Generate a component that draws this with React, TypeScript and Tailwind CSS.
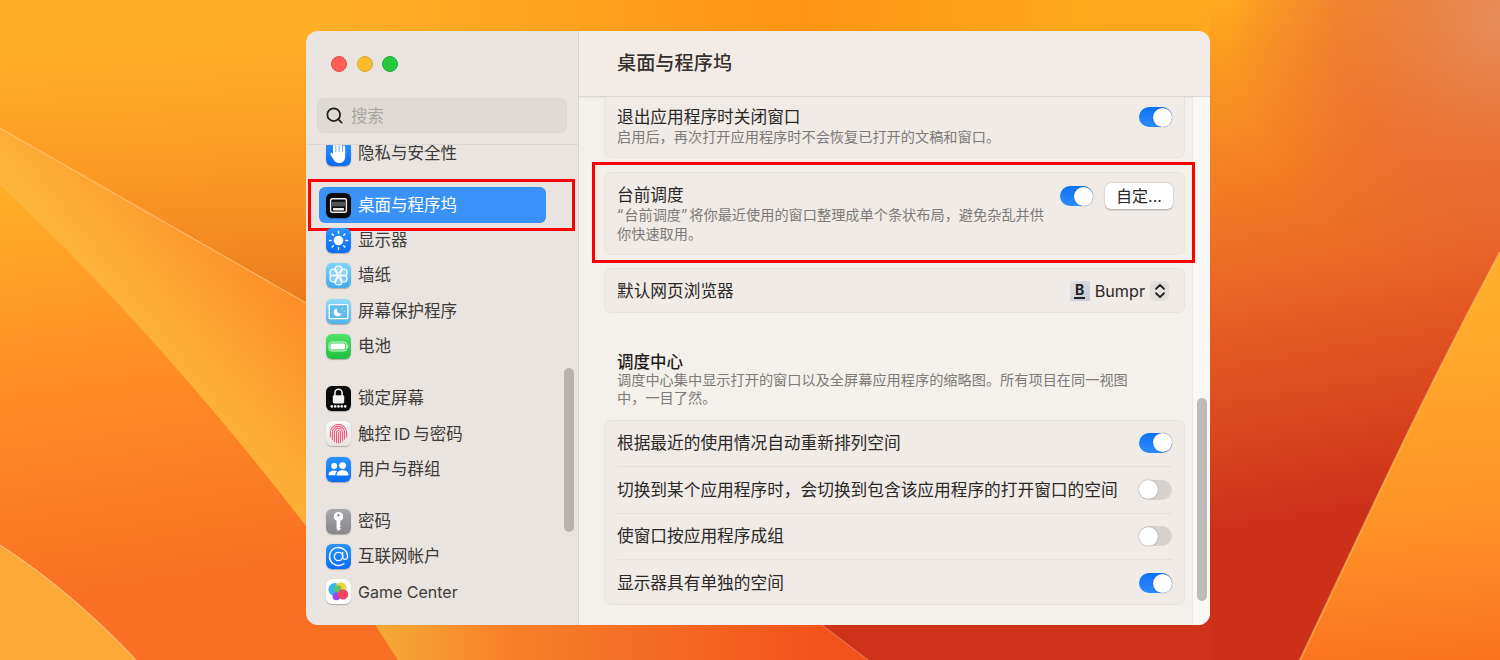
import type { ReactNode } from "react";
import { Search } from "lucide-react";

// wallpaper is one drawing, the window sits on top of it
function Wallpaper() {
  return (
    <svg className="absolute inset-0 h-[660px] w-[1500px]" viewBox="0 0 1500 660">
      <defs>
        <linearGradient id="wpTop" gradientUnits="userSpaceOnUse" x1="306" y1="20" x2="320" y2="310">
          <stop offset="0" stopColor="#ffb029" />
          <stop offset="0.5" stopColor="#fb9a24" />
          <stop offset="1" stopColor="#ea7a1c" />
        </linearGradient>
        <linearGradient id="wpStrip" gradientUnits="userSpaceOnUse" x1="306" y1="0" x2="1210" y2="0">
          <stop offset="0" stopColor="#ffb029" />
          <stop offset="0.55" stopColor="#ff9514" />
          <stop offset="0.85" stopColor="#ffa81c" />
          <stop offset="1" stopColor="#ffa81f" />
        </linearGradient>
        <linearGradient id="wpBand" gradientUnits="userSpaceOnUse" x1="130" y1="350" x2="270" y2="240">
          <stop offset="0" stopColor="#fdb53c" />
          <stop offset="0.3" stopColor="#fcab34" />
          <stop offset="1" stopColor="#fd8b26" />
        </linearGradient>
        <linearGradient id="wpLow" gradientUnits="userSpaceOnUse" x1="0" y1="190" x2="60" y2="600">
          <stop offset="0" stopColor="#ffae28" />
          <stop offset="0.5" stopColor="#ff8c24" />
          <stop offset="1" stopColor="#f97024" />
        </linearGradient>
        <linearGradient id="wpBottom" gradientUnits="userSpaceOnUse" x1="375" y1="0" x2="822" y2="0">
          <stop offset="0" stopColor="#f5ab35" />
          <stop offset="0.3" stopColor="#f7802a" />
          <stop offset="1" stopColor="#f2531c" />
        </linearGradient>
        <linearGradient id="wpRight" gradientUnits="userSpaceOnUse" x1="1230" y1="0" x2="1320" y2="520">
          <stop offset="0" stopColor="#ffa81f" />
          <stop offset="0.55" stopColor="#ea6426" />
          <stop offset="1" stopColor="#cc3018" />
        </linearGradient>
        <radialGradient id="wpCorner" gradientUnits="userSpaceOnUse" cx="1500" cy="20" r="270">
          <stop offset="0" stopColor="#e58c5c" stopOpacity="0.95" />
          <stop offset="0.6" stopColor="#e3653e" stopOpacity="0.5" />
          <stop offset="1" stopColor="#e05a38" stopOpacity="0" />
        </radialGradient>
        <linearGradient id="wpBig" gradientUnits="userSpaceOnUse" x1="1460" y1="290" x2="1490" y2="660">
          <stop offset="0" stopColor="#ffaf2c" />
          <stop offset="0.6" stopColor="#fe9427" />
          <stop offset="1" stopColor="#fb7220" />
        </linearGradient>
      </defs>
      <rect x="0" y="0" width="420" height="660" fill="url(#wpLow)" />
      <path d="M0 0H340V322L0 128Z" fill="url(#wpTop)" />
      <rect x="306" y="0" width="904" height="40" fill="url(#wpStrip)" />
      <path d="M0 128L306 303L345 325V575L306 526Q153 328 0 185Z" fill="url(#wpBand)" />
      <path d="M0 128L306 303" stroke="#ffd39a" strokeOpacity="0.55" strokeWidth="1.2" fill="none" />
      <path d="M0 545Q70 590 136 660H0Z" fill="#fbaa37" />
      <path d="M0 545Q70 590 136 660" stroke="#ffd9a0" strokeOpacity="0.6" strokeWidth="1.2" fill="none" />
      <rect x="700" y="600" width="510" height="60" fill="#ce3319" />
      <path d="M359 600L398 660H868L789 600Z" fill="url(#wpBottom)" />
      <path d="M868 660L822 625" stroke="#f58a60" strokeOpacity="0.6" strokeWidth="1.2" fill="none" />
      <rect x="1210" y="0" width="290" height="660" fill="url(#wpRight)" />
      <rect x="1210" y="0" width="290" height="660" fill="url(#wpCorner)" />
      <path d="M1500 252Q1437 370 1377 497Q1340 575 1300 660H1500Z" fill="url(#wpBig)" />
      <path d="M1500 252Q1437 370 1377 497Q1340 575 1300 660" stroke="#ffc56a" strokeOpacity="0.55" strokeWidth="2" fill="none" />
    </svg>
  );
}

function Tile({ className, children }: { className: string; children?: ReactNode }) {
  return (
    <div className={`h-[25px] w-[25px] shrink-0 overflow-hidden rounded-[6px] shadow-[0_0.5px_1px_rgba(0,0,0,0.25)] ${className}`}>
      <svg viewBox="0 0 25 25" className="h-[25px] w-[25px]">
        {children}
      </svg>
    </div>
  );
}

const BLUE = "bg-linear-to-b from-[#2b93ff] to-[#0a6cf5]";

const icons: Record<string, ReactNode> = {
  privacy: (
    <Tile className={BLUE}>
      <g fill="#fff">
        <rect x="7" y="3.5" width="2.6" height="10" rx="1.2" />
        <rect x="10.2" y="1.5" width="2.6" height="11" rx="1.2" />
        <rect x="13.4" y="2.5" width="2.6" height="10" rx="1.2" />
        <rect x="16.6" y="4.5" width="2.6" height="9" rx="1.2" />
        <path d="M7 11H19.2V15.5C19.2 19.8 16.8 22 13.2 22C10 22 8.8 20.4 7.4 18.2L4.4 13.4C3.8 12.2 5.4 11.1 6.4 12.2L7 13Z" />
      </g>
    </Tile>
  ),
  dock: (
    <Tile className="bg-[#0b0b0b]">
      <rect x="4.6" y="5.8" width="15.8" height="13.4" rx="1.8" fill="none" stroke="#eee" strokeWidth="1.4" />
      <rect x="5.8" y="8.8" width="13.4" height="4.6" fill="#55565a" />
      <rect x="7" y="15" width="11" height="2.4" rx="0.6" fill="#eee" />
    </Tile>
  ),
  display: (
    <Tile className={BLUE}>
      <circle cx="12.5" cy="12.5" r="4.8" fill="#fff" />
      <g stroke="#fff" strokeWidth="1.4" strokeLinecap="round">
        <path d="M12.5 3.4V5.2M12.5 19.8V21.6M3.4 12.5H5.2M19.8 12.5H21.6M6.1 6.1L7.3 7.3M17.7 17.7L18.9 18.9M6.1 18.9L7.3 17.7M17.7 7.3L18.9 6.1" />
      </g>
    </Tile>
  ),
  wallpaper: (
    <Tile className="bg-linear-to-b from-[#7fd3fb] to-[#43a9ec]">
      <g fill="#ffffff" fillOpacity="0.25" stroke="#fff" strokeWidth="1.2">
        <circle cx="12.5" cy="6.6" r="3.5" />
        <circle cx="12.5" cy="18.4" r="3.5" />
        <circle cx="7.4" cy="9.5" r="3.5" />
        <circle cx="17.6" cy="9.5" r="3.5" />
        <circle cx="7.4" cy="15.5" r="3.5" />
        <circle cx="17.6" cy="15.5" r="3.5" />
      </g>
      <circle cx="12.5" cy="12.5" r="1.6" fill="#fff" />
    </Tile>
  ),
  saver: (
    <Tile className="bg-linear-to-b from-[#8ddcf8] to-[#4fb4e8]">
      <rect x="3.2" y="5.6" width="18.6" height="14" rx="0.8" fill="#5cbdec" stroke="#fff" strokeWidth="1.4" />
      <path d="M11.2 9.2A4 4 0 1 0 15.6 14.2A3.6 3.6 0 0 1 11.2 9.2Z" fill="#fff" />
      <circle cx="16" cy="9.6" r="0.7" fill="#fff" />
      <circle cx="18.2" cy="12" r="0.6" fill="#fff" />
    </Tile>
  ),
  battery: (
    <Tile className="bg-linear-to-b from-[#4fe36a] to-[#1dc040]">
      <rect x="3" y="8" width="17.6" height="9" rx="2.6" fill="none" stroke="#d5f7da" strokeWidth="1" />
      <rect x="4.4" y="9.4" width="14.8" height="6.2" rx="1.6" fill="#fff" />
      <rect x="21.2" y="11" width="1" height="3" rx="0.5" fill="#d5f7da" />
    </Tile>
  ),
  lock: (
    <Tile className="bg-[#0a0a0a]">
      <path d="M8.9 10V6.8a3.6 3.6 0 0 1 7.2 0V10" fill="none" stroke="#f4f4f4" strokeWidth="1.6" />
      <rect x="6.8" y="9.2" width="11.4" height="8.2" rx="1.4" fill="#f4f4f4" />
      <g fill="#f4f4f4">
        <circle cx="5.8" cy="20.4" r="1.3" />
        <circle cx="9.2" cy="20.4" r="1.3" />
        <circle cx="12.5" cy="20.4" r="1.3" />
        <circle cx="15.8" cy="20.4" r="1.3" />
        <circle cx="19.2" cy="20.4" r="1.3" />
      </g>
    </Tile>
  ),
  touch: (
    <Tile className="bg-linear-to-b from-[#fbfafa] to-[#e6e3e1]">
      <g fill="none" stroke="#ec5d7c" strokeWidth="1.1" strokeLinecap="round">
        <path d="M4.4 16V11.5a8.1 8.1 0 0 1 16.2 0V16" />
        <path d="M6.4 18.6V11.5a6.1 6.1 0 0 1 12.2 0V18" />
        <path d="M8.4 20.4V11.5a4.1 4.1 0 0 1 8.2 0V20" />
        <path d="M10.5 21.6V11.5a2 2 0 0 1 4 0V21.4" />
        <path d="M12.5 11.5V22" />
      </g>
    </Tile>
  ),
  users: (
    <Tile className={BLUE}>
      <g fill="#fff">
        <circle cx="8.2" cy="9" r="3" />
        <circle cx="16.6" cy="8.6" r="3.4" />
        <path d="M2.6 18C2.6 15 5 13.4 8.2 13.4C9.4 13.4 10.4 13.6 11.2 14C10 15 9.4 16.4 9.4 18.2H3.4C2.9 18.2 2.6 18.2 2.6 18Z" />
        <path d="M10.6 18C10.6 15 13.2 13.2 16.6 13.2C20 13.2 22.6 15 22.6 18C22.6 18.2 22.3 18.4 21.8 18.4H11.4C10.9 18.4 10.6 18.2 10.6 18Z" />
      </g>
    </Tile>
  ),
  key: (
    <Tile className="bg-linear-to-b from-[#a8a8ac] to-[#86868b]">
      <path d="M12.5 3A4.6 4.6 0 0 0 10.6 11.8V20L12.5 22L15 19.6L13.6 18.4L15 17L13.6 15.6L14.4 14.4V11.8A4.6 4.6 0 0 0 12.5 3Z" fill="#fff" />
      <circle cx="12.5" cy="6.2" r="1.2" fill="#8f8f94" />
    </Tile>
  ),
  internet: (
    <Tile className={BLUE}>
      <g fill="none" stroke="#fff" strokeWidth="1.5" strokeLinecap="round" transform="translate(1.7 1.7) scale(0.9)">
        <circle cx="12" cy="12" r="4.6" />
        <path d="M16.6 7.4V13.4A2.9 2.9 0 0 0 22 13.4V12A10 10 0 1 0 18 20" />
      </g>
    </Tile>
  ),
  game: (
    <Tile className="bg-white">
      <circle cx="8.8" cy="10.5" r="6.4" fill="#36b6ea" />
      <circle cx="15" cy="8.8" r="5.6" fill="#f4d53c" />
      <circle cx="11.8" cy="9.8" r="3.6" fill="#5cc46a" />
      <circle cx="10.4" cy="17.4" r="3.8" fill="#a040e8" />
      <circle cx="17" cy="15.4" r="5.2" fill="#f0455e" />
    </Tile>
  ),
};

const groups = [
  [{ id: "privacy", label: "隐私与安全性" }],
  [
    { id: "dock", label: "桌面与程序坞", active: true },
    { id: "display", label: "显示器" },
    { id: "wallpaper", label: "墙纸" },
    { id: "saver", label: "屏幕保护程序" },
    { id: "battery", label: "电池" },
  ],
  [
    { id: "lock", label: "锁定屏幕" },
    { id: "touch", label: "触控\u2009ID\u2009与密码" },
    { id: "users", label: "用户与群组" },
  ],
  [
    { id: "key", label: "密码" },
    { id: "internet", label: "互联网帐户" },
    { id: "game", label: "Game Center" },
  ],
];

function Sidebar() {
  return (
    <aside className="relative flex w-[273px] shrink-0 flex-col border-r border-[#d8d3cf] bg-[#e9e4df]">
      <div className="flex h-[66px] shrink-0 items-center gap-[9.5px] pl-[25px]">
        <span className="h-4 w-4 rounded-full border border-[#e5453e] bg-[#ff5f57]" />
        <span className="h-4 w-4 rounded-full border border-[#e2a528] bg-[#febc2e]" />
        <span className="h-4 w-4 rounded-full border border-[#22ad37] bg-[#28c840]" />
      </div>
      <div className="mx-[11px] mt-px flex h-[35px] shrink-0 items-center gap-[7px] rounded-[7px] border border-[#dcd7d2] bg-[#dfdad5] pl-[7px]">
        <Search size={19} strokeWidth={2.2} className="text-[#1f1f1f]" />
        <span className="pt-[1px] text-[16.5px] text-[#a9a5a1]">搜索</span>
      </div>
      <div className="mt-[11px] flex min-h-0 flex-1 flex-col gap-[16.5px] overflow-hidden border-t border-[#dbd6d1]">
        {groups.map((group, i) => (
          <div key={i} className={i === 0 ? "-mt-[9.5px]" : ""}>
            {group.map((item: { id: string; label: string; active?: boolean }) => (
              <div
                key={item.id}
                className={`relative ml-[13px] flex h-[35.4px] w-[227px] items-center gap-[7px] rounded-[6px] pl-[7px] ${
                  item.id === "game" ? "text-[16px]" : "text-[16.5px]"
                } ${item.active ? "bg-[#3a91f7] text-white" : "text-[#3c3a38]"}`}
              >
                {icons[item.id]}
                <span>{item.label}</span>
                {item.active && (
                  <div className="absolute -top-[8px] -bottom-[8px] -left-[11px] -right-[29px] border-[3px] border-[#ff0000]" />
                )}
              </div>
            ))}
          </div>
        ))}
      </div>
      <div className="absolute left-[258px] top-[337px] h-[164px] w-[10px] rounded-full bg-[#b7b2ae]" />
    </aside>
  );
}

function Toggle({ on }: { on: boolean }) {
  return (
    <div
      className={`flex h-[20px] w-[33px] shrink-0 items-center rounded-full ${
        on ? "justify-end bg-linear-to-b from-[#0a72f8] to-[#2c8cff]" : "justify-start bg-[#d7d2ce]"
      }`}
    >
      <span className="h-[19px] w-[19px] rounded-full bg-white shadow-[0_0_1.5px_rgba(0,0,0,0.45)]" />
    </div>
  );
}

const spaces = [
  { label: "根据最近的使用情况自动重新排列空间", on: true },
  { label: "切换到某个应用程序时，会切换到包含该应用程序的打开窗口的空间", on: false },
  { label: "使窗口按应用程序成组", on: false },
  { label: "显示器具有单独的空间", on: true },
];

const CARD = "rounded-[7px] border border-[#e8e3df] bg-[#f0ebe7]";
const TITLE = "text-[16.7px] leading-[22px] text-[#2a2826]";
const DESC = "text-[14.2px] leading-[18.5px] text-[#7d7a77]";

function Content() {
  return (
    <main className="flex min-w-0 flex-1 flex-col bg-[#f4f0ec]">
      <header className="flex h-[66px] shrink-0 items-center border-b border-[#dcd7d3] bg-[#f3ece6] pl-[38px] shadow-[0_1px_1px_rgba(0,0,0,0.04)]">
        <h1 className="text-[19.2px] font-medium text-[#33302e]">桌面与程序坞</h1>
      </header>
      <div className="flex min-h-0 flex-1">
        <div className="min-w-0 flex-1 pl-[25px] pr-[7px]">
          <div className={`${CARD} flex h-[61px] items-start justify-between rounded-t-none border-t-0 pl-[12px] pr-[12px] pt-[9px]`}>
            <div>
              <div className={TITLE}>退出应用程序时关闭窗口</div>
              <div className={DESC}>启用后，再次打开应用程序时不会恢复已打开的文稿和窗口。</div>
            </div>
            <div className="pt-[1px]">
              <Toggle on />
            </div>
          </div>

          <div className={`${CARD} relative mt-[14px] flex h-[83px] items-start justify-between pl-[12px] pr-[11px] pt-[10px]`}>
            <div className="pt-px">
              <div className={TITLE}>台前调度</div>
              <div className={DESC}>
                <span className="mr-[1px]">“</span>台前调度<span className="mr-[2px]">”</span>将你最近使用的窗口整理成单个条状布局，避免杂乱并供
                <br />
                你快速取用。
              </div>
            </div>
            <div className="flex items-center gap-[12px]">
              <Toggle on />
              <button className="flex h-[26px] w-[68px] items-center justify-center rounded-[6px] bg-white text-[16px] text-[#2a2826] shadow-[0_0.5px_2px_rgba(0,0,0,0.3)]">
                自定...
              </button>
            </div>
            <div className="absolute -top-[11px] -bottom-[9px] -left-[13px] -right-[11px] border-[3px] border-[#ff0000]" />
          </div>

          <div className={`${CARD} mt-[13px] flex h-[45px] items-center justify-between pl-[12px] pr-[15px]`}>
            <span className={TITLE}>默认网页浏览器</span>
            <div className="flex items-center">
              <div className="flex h-[20px] w-[20px] flex-col items-center justify-center bg-linear-to-br from-[#dfe1e6] to-[#c6c9d2] text-[14px] font-bold leading-[15px] text-[#222]">
                <span>B</span>
                <span className="h-[2px] w-[11px] bg-[#222]" />
              </div>
              <span className="ml-[5px] text-[16.2px] leading-[22px] text-[#2a2826]">Bumpr</span>
              <div className="ml-[5px] flex h-[20px] w-[19px] items-center justify-center rounded-[5px] bg-[#e3dfdb]">
                <svg viewBox="0 0 12 16" className="h-[18px] w-[14px]" fill="none" stroke="#222" strokeWidth="1.7" strokeLinecap="round" strokeLinejoin="round">
                  <path d="M2.5 6L6 2.5L9.5 6M2.5 10L6 13.5L9.5 10" />
                </svg>
              </div>
            </div>
          </div>

          <div className="mt-[41px] pl-[13px]">
            <h2 className="text-[16.5px] font-medium leading-[17px] text-[#1f1d1b]">调度中心</h2>
            <p className="text-[14.2px] leading-[18px] text-[#7d7a77]">
              调度中心集中显示打开的窗口以及全屏幕应用程序的缩略图。所有项目在同一视图
              <br />
              中，一目了然。
            </p>
          </div>

          <div className={`${CARD} mt-[13px] h-[185px] px-[12px]`}>
            <div className="-mt-[1.5px]">
              {spaces.map((row, i) => (
                <div
                  key={row.label}
                  className={`flex h-[46.6px] items-center justify-between ${i > 0 ? "border-t border-[#e4dfdb]" : ""}`}
                >
                  <span className={TITLE}>{row.label}</span>
                  <Toggle on={row.on} />
                </div>
              ))}
            </div>
          </div>
        </div>
        <div className="w-[18px] shrink-0 border-l border-[#ebe7e3] bg-[#f9f8f6] pl-[3.5px] pt-[301px]">
          <div className="h-[203px] w-[10px] rounded-full bg-[#bdbbb9]" />
        </div>
      </div>
    </main>
  );
}

export default function App() {
  return (
    <div className="relative h-[660px] w-[1500px] overflow-hidden pl-[306px] pt-[31px] font-['Inter','Noto_Sans_CJK_SC',sans-serif]">
      <Wallpaper />
      <div className="relative flex h-[594px] w-[904px] overflow-hidden rounded-[12px]">
        <Sidebar />
        <Content />
      </div>
    </div>
  );
}
